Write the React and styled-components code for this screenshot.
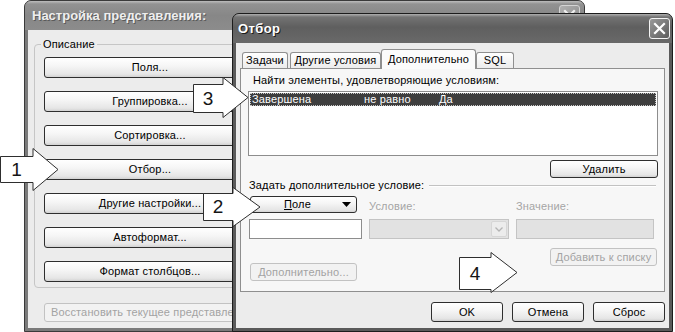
import React from "react";
import styled, { createGlobalStyle } from "styled-components";

const UI_FONT = `"Liberation Sans", Arial, "DejaVu Sans", sans-serif`;
const TITLE_FONT = `"Liberation Sans", "DejaVu Sans", sans-serif`;

const GlobalStyle = createGlobalStyle`
  html, body { margin: 0; padding: 0; background: #fff; }
  body { font-family: ${UI_FONT}; font-size: 11px; letter-spacing: 0.15px; color: #000; }
  * { box-sizing: border-box; }
`;

const Desktop = styled.div`
  position: relative;
  width: 675px;
  height: 332px;
  overflow: hidden;
  background: #fff;
`;

const Window = styled.div`
  position: absolute;
  left: ${(p) => p.$x}px;
  top: ${(p) => p.$y}px;
  width: ${(p) => p.$w}px;
  height: ${(p) => p.$h}px;
  display: flex;
  flex-direction: column;
  border: 1px solid ${(p) => (p.$active ? "#1c1c1c" : "#3a3a3a")};
  border-radius: 7px 7px 0 0;
  background: ${(p) => (p.$active ? "#5a5a5a" : "#7a7a7a")};
  padding: 0 3px 3px;
  z-index: ${(p) => (p.$active ? 2 : 1)};
`;

const TitleBar = styled.div`
  flex: none;
  height: 29px;
  margin: 0 -3px;
  padding: 0 ${(p) => p.$right}px 0 ${(p) => p.$left}px;
  display: flex;
  align-items: center;
  justify-content: space-between;
  border-radius: 6px 6px 0 0;
  background: ${(p) =>
    p.$active
      ? "linear-gradient(#b0b0b0 0, #737373 3px, #5f5f5f 45%, #696969 100%)"
      : "linear-gradient(#bdbdbd 0, #929292 3px, #878787 50%, #8c8c8c 100%)"};
`;

const Title = styled.span`
  font-family: ${TITLE_FONT};
  font-weight: 700;
  font-size: 13px;
  letter-spacing: ${(p) => (p.$active ? "0.4px" : "0")};
  color: ${(p) => (p.$active ? "#fff" : "#eeeeee")};
  text-shadow: 1px 1px 0 ${(p) => (p.$active ? "#1a1a1a" : "#5a5a5a")};
`;

const CloseBox = styled.div`
  width: 21px;
  height: 21px;
  border: 1px solid ${(p) => (p.$active ? "#f4f4f4" : "#d4d4d4")};
  border-radius: 3px;
  background: ${(p) =>
    p.$active
      ? "linear-gradient(135deg, #9a9a9a, #5c5c5c)"
      : "linear-gradient(135deg, #b0b0b0, #8a8a8a)"};
  display: flex;
  align-items: center;
  justify-content: center;
`;

const Client = styled.div`
  flex: 1;
  min-height: 0;
  display: flex;
  flex-direction: column;
  background: #ececec;
  padding: ${(p) => p.$pad};
`;

/* ---- back window ---- */

const GroupBox = styled.fieldset`
  margin: 0;
  width: 270px;
  padding: 6px 9px 5px;
  border: 1px solid #c6c6c6;
  border-radius: 4px;
  display: flex;
  flex-direction: column;
  gap: 13px;
`;

const Legend = styled.legend`
  padding: 0 2px;
  margin-left: -3px;
  line-height: 13px;
`;

const Button = styled.div`
  flex: none;
  width: ${(p) => p.$w}px;
  height: ${(p) => p.$h || 21}px;
  display: flex;
  align-items: center;
  justify-content: center;
  gap: 4px;
  border: 1px solid ${(p) => (p.$disabled ? "#c2c2c2" : "#2e2e2e")};
  border-radius: 3px;
  background: ${(p) =>
    p.$disabled
      ? "#f2f2f2"
      : "linear-gradient(#ffffff 0, #f6f6f6 40%, #e6e6e6 85%, #d2d2d2 100%)"};
  color: ${(p) => (p.$disabled ? "#a3a3a3" : "#000")};
  white-space: nowrap;
  overflow: hidden;
  line-height: 13px;
`;

const RestoreButton = styled(Button)`
  margin: 15px 0 0 10px;
  justify-content: flex-start;
  padding-left: 6px;
`;

/* ---- front window ---- */

const TabBar = styled.div`
  flex: none;
  height: 20px;
  display: flex;
  align-items: flex-end;
  padding-left: 2px;
`;

const Tab = styled.div`
  position: relative;
  width: ${(p) => p.$w}px;
  height: ${(p) => (p.$selected ? 20 : 16)}px;
  margin-right: ${(p) => p.$gap || 0}px;
  margin-bottom: ${(p) => (p.$selected ? 0 : 1)}px;
  display: flex;
  align-items: center;
  justify-content: center;
  border: 1px solid #8f8f8f;
  border-bottom: none;
  border-radius: 3px 3px 0 0;
  background: ${(p) =>
    p.$selected ? "#fbfbfb" : "linear-gradient(#ffffff, #ececec)"};
  z-index: ${(p) => (p.$selected ? 2 : 0)};
  line-height: 13px;
`;

const TabPanel = styled.div`
  position: relative;
  z-index: 1;
  margin-top: -1px;
  width: 425px;
  height: 224px;
  flex: none;
  border: 1px solid #8f8f8f;
  background: #f7f7f7;
  padding: 5px 6px 0 7px;
  display: flex;
  flex-direction: column;
`;

const Label = styled.div`
  line-height: 13px;
  margin-left: ${(p) => p.$ml || 0}px;
  color: ${(p) => (p.$disabled ? "#a5a5a5" : "#000")};
  white-space: nowrap;
`;

const ListBox = styled.div`
  margin-top: 4px;
  height: 65px;
  border: 1px solid #8d8d8d;
  background: #fff;
  padding: 1px;
`;

const ListRow = styled.div`
  display: grid;
  grid-template-columns: 112px 75px 1fr;
  height: 13px;
  line-height: 13px;
  padding-left: 2px;
  background: #3e3e3e;
  color: #fff;
  outline: 1px dotted #c8c8c8;
  outline-offset: -1px;
`;

const RightButton = styled(Button)`
  align-self: flex-end;
  margin: ${(p) => p.$m};
`;

const Separator = styled.div`
  margin-top: 1px;
  display: flex;
  align-items: center;
  gap: 5px;
  padding: 0 2px 0 1px;

  &::after {
    content: "";
    flex: 1;
    height: 1px;
    background: #c2c2c2;
    box-shadow: 0 1px 0 #fff;
  }
`;

const ConditionGrid = styled.div`
  margin: 5px 0 0 1px;
  display: grid;
  grid-template-columns: 113px 140px 138px;
  grid-template-rows: 17px 20px;
  column-gap: 7px;
  row-gap: 6px;
  align-items: end;
`;

const FieldButton = styled(Button)`
  justify-content: space-between;
  margin-left: 1px;
  padding: 0 5px 0 33px;
`;

const TextBox = styled.div`
  height: 20px;
  display: flex;
  justify-content: flex-end;
  align-items: stretch;
  padding: 1px;
  border: 1px solid ${(p) => (p.$disabled ? "#c4c4c4" : "#8d8d8d")};
  background: ${(p) => (p.$disabled ? "#e2e2e2" : "#fff")};
`;

const ComboArrow = styled.div`
  width: 16px;
  border: 1px solid #d6d6d6;
  border-radius: 2px;
  background: #ececec;
  display: flex;
  align-items: center;
  justify-content: center;
`;

const ActionRow = styled.div`
  margin-top: 9px;
  display: flex;
  justify-content: space-between;
  align-items: flex-start;
  padding: 0 1px 0 2px;
`;

const LowerButton = styled(Button)`
  margin-top: 15px;
`;

const FooterRow = styled.div`
  margin-top: 10px;
  display: flex;
  justify-content: flex-end;
  gap: 9px;
`;

/* ---- callouts ---- */

const CalloutBox = styled.div`
  position: absolute;
  left: ${(p) => p.$x}px;
  top: ${(p) => p.$y}px;
  width: ${(p) => p.$w}px;
  height: ${(p) => p.$h}px;
  z-index: 10;
`;

const CalloutShape = styled.svg`
  position: absolute;
  left: 0;
  top: 0;
  overflow: visible;
`;

const CalloutNum = styled.span`
  position: absolute;
  left: 0;
  top: ${(p) => p.$top}px;
  width: ${(p) => p.$w}px;
  height: ${(p) => p.$h}px;
  display: flex;
  align-items: center;
  justify-content: center;
  font-family: "Liberation Sans", Arial, sans-serif;
  font-size: 19px;
  letter-spacing: 0;
  color: #151515;
`;

const CloseIcon = ({ active }) => (
  <svg width="13" height="13" viewBox="0 0 13 13">
    <path
      d="M2 2 L11 11 M11 2 L2 11"
      stroke={active ? "#fff" : "#f0f0f0"}
      strokeWidth="2.2"
      strokeLinecap="square"
    />
  </svg>
);

const Callout = ({ n, x, rt, rb, hx, ht, hb, tip }) => {
  const w = tip - x + 1;
  const h = hb - ht + 1;
  const a = rt - ht + 0.5;
  const b = rb - ht - 0.5;
  const hxr = hx - x;
  const pts = [
    [0.5, a],
    [hxr, a],
    [hxr, 0.5],
    [tip - x, (hb - ht) / 2],
    [hxr, h - 1.5],
    [hxr, b],
    [0.5, b],
  ]
    .map((p) => p.join(","))
    .join(" ");
  return (
    <CalloutBox $x={x} $y={ht} $w={w} $h={h}>
      <CalloutShape width={w} height={h}>
        <polygon points={pts} fill="#fff" stroke="#2e2e2e" strokeWidth="1" />
      </CalloutShape>
      <CalloutNum $top={rt - ht} $w={hxr} $h={rb - rt}>
        {n}
      </CalloutNum>
    </CalloutBox>
  );
};

const viewButtons = [
  "Поля...",
  "Группировка...",
  "Сортировка...",
  "Отбор...",
  "Другие настройки...",
  "Автоформат...",
  "Формат столбцов...",
];

const callouts = [
  { n: "1", x: 0, rt: 156, rb: 183, hx: 33, ht: 148, hb: 191, tip: 58 },
  { n: "2", x: 203, rt: 193, rb: 221, hx: 233, ht: 187, hb: 227, tip: 260 },
  { n: "3", x: 193, rt: 84, rb: 113, hx: 223, ht: 77, hb: 118, tip: 248 },
  { n: "4", x: 459, rt: 257, rb: 290, hx: 491, ht: 252, hb: 293, tip: 517 },
];

const App = () => {
  return (
    <Desktop>
      <GlobalStyle />

      <Window $x={24} $y={0} $w={561} $h={332}>
        <TitleBar $left={7} $right={4}>
          <Title>Настройка представления:</Title>
          <CloseBox>
            <CloseIcon />
          </CloseBox>
        </TitleBar>
        <Client $pad="8px 0 0 6px">
          <GroupBox>
            <Legend>Описание</Legend>
            {viewButtons.map((label) => (
              <Button key={label} $w={212}>
                {label}
              </Button>
            ))}
          </GroupBox>
          <RestoreButton $w={240} $h={19} $disabled>
            Восстановить текущее представление
          </RestoreButton>
        </Client>
      </Window>

      <Window $x={232} $y={13} $w={441} $h={319} $active>
        <TitleBar $left={5} $right={2} $active>
          <Title $active>Отбор</Title>
          <CloseBox $active>
            <CloseIcon active />
          </CloseBox>
        </TitleBar>
        <Client $pad="6px 4px 6px 4px">
          <TabBar>
            <Tab $w={46} $gap={2}>Задачи</Tab>
            <Tab $w={91}>Другие условия</Tab>
            <Tab $w={95} $selected>
              Дополнительно
            </Tab>
            <Tab $w={38}>SQL</Tab>
          </TabBar>
          <TabPanel>
            <Label $ml={5}>Найти элементы, удовлетворяющие условиям:</Label>
            <ListBox>
              <ListRow>
                <span>Завершена</span>
                <span>не равно</span>
                <span>Да</span>
              </ListRow>
            </ListBox>
            <RightButton $w={108} $h={18} $m="4px 0 0 0">
              Удалить
            </RightButton>
            <Separator>
              <span>Задать дополнительное условие:</span>
            </Separator>
            <ConditionGrid>
              <FieldButton $w={107} $h={17}>
                <span>
                  <u>П</u>оле
                </span>
                <svg width="9" height="5" viewBox="0 0 9 5">
                  <polygon points="0,0 9,0 4.5,5" fill="#000" />
                </svg>
              </FieldButton>
              <Label $disabled>Условие:</Label>
              <Label $disabled>Значение:</Label>
              <TextBox />
              <TextBox $disabled>
                <ComboArrow>
                  <svg width="8" height="5" viewBox="0 0 8 5">
                    <path
                      d="M0.5 0.5 L4 4 L7.5 0.5"
                      fill="none"
                      stroke="#b4b4b4"
                      strokeWidth="1.3"
                    />
                  </svg>
                </ComboArrow>
              </TextBox>
              <TextBox $disabled />
            </ConditionGrid>
            <ActionRow>
              <LowerButton $w={107} $h={18} $disabled>
                Дополнительно...
              </LowerButton>
              <Button $w={107} $h={18} $disabled>
                Добавить к списку
              </Button>
            </ActionRow>
          </TabPanel>
          <FooterRow>
            <Button $w={72} $h={20}>OK</Button>
            <Button $w={72} $h={20}>Отмена</Button>
            <Button $w={72} $h={20}>Сброс</Button>
          </FooterRow>
        </Client>
      </Window>

      {callouts.map((c) => (
        <Callout key={c.n} {...c} />
      ))}
    </Desktop>
  );
};

export default App;
